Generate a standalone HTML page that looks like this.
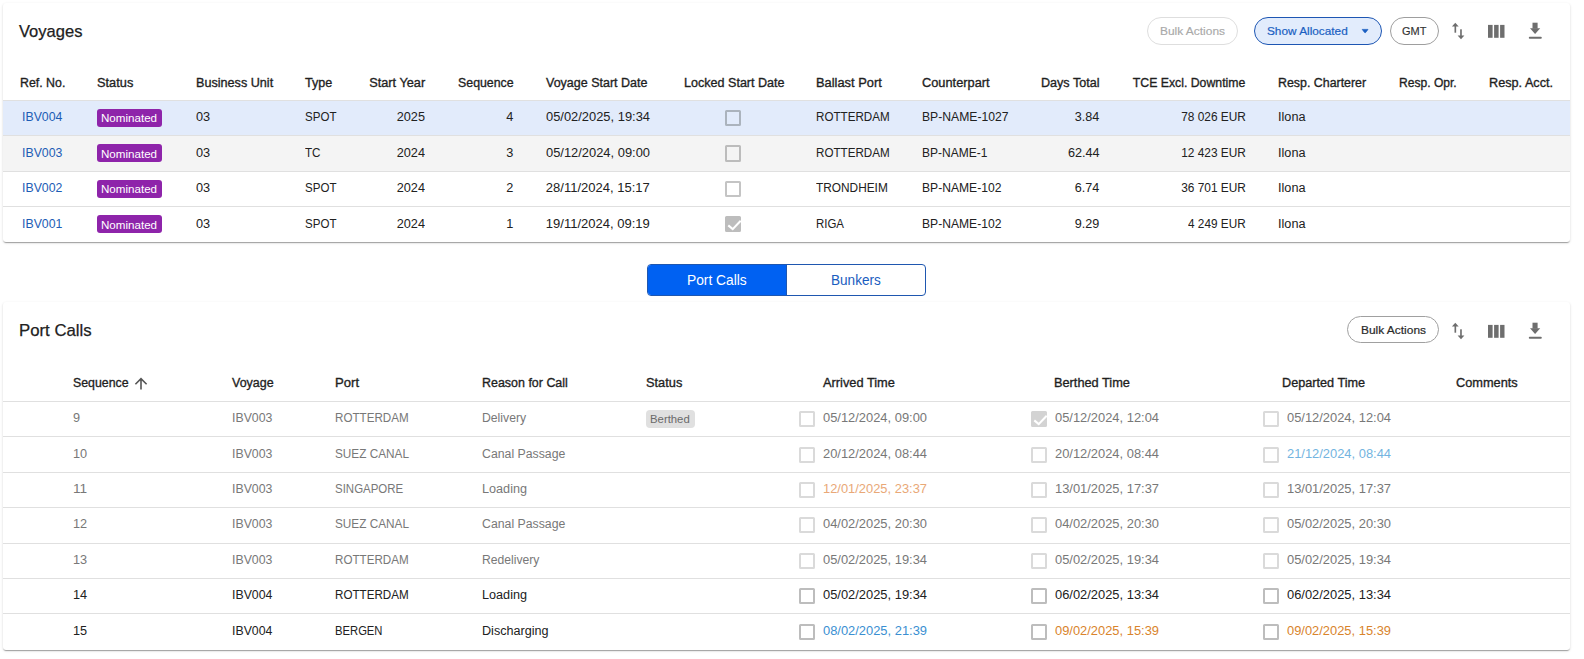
<!DOCTYPE html>
<html><head><meta charset="utf-8"><style>
html,body{margin:0;padding:0;width:1584px;height:659px;overflow:hidden;background:#fff;position:relative}
body{font-family:"Liberation Sans",sans-serif}
.card{position:absolute;background:#fff;border-radius:3px;box-shadow:0px 2px 1px -1px rgba(0,0,0,0.2),0px 1px 1px 0px rgba(0,0,0,0.14),0px 1px 3px 0px rgba(0,0,0,0.12)}
.hl{position:absolute;height:1px;background:#e0e0e0}
.btn{position:absolute;border:1px solid #bbb;border-radius:14px;box-sizing:border-box}
.badge{position:absolute;background:#8e24aa;border-radius:3px}
.cb{position:absolute;width:16.2px;height:16.2px;box-sizing:border-box;border:2px solid #bdbdbd;border-radius:1.5px}
.t{position:absolute;white-space:nowrap}
</style></head><body>
<div class="card" style="left:3px;top:3px;width:1567px;height:238.6px"></div>
<div class="btn" style="left:1147.2px;top:17.2px;width:90.5px;height:27.4px;border-color:#dedede"></div>
<div class="btn" style="left:1254px;top:17.2px;width:127.7px;height:27.4px;border-color:#1d56b3;background:#e2ecfc"></div>
<svg style="position:absolute;left:1360px;top:27px" width="10" height="8" viewBox="1360 27 10 8"><path d="M1362.2 29.4 L1368.0 29.4 L1365.6 32.5 Q1365.1 33.1 1364.6 32.5 Z" fill="#1a5fc2" stroke="#1a5fc2" stroke-width="0.7" stroke-linejoin="round"/></svg>
<div class="btn" style="left:1390px;top:17.2px;width:48.8px;height:27.4px;border-color:#9e9e9e"></div>
<svg style="position:absolute;left:1440px;top:10px" width="120" height="40" viewBox="1440 10 120 40">
<g fill="#6e6e6e">
<path d="M1451.9 26.6 L1455.3 22.8 L1458.7 26.6 Z"/><rect x="1454.5" y="25.5" width="1.65" height="7.2"/>
<path d="M1457.6 35.4 L1461.0 39.2 L1464.4 35.4 Z"/><rect x="1460.15" y="29.3" width="1.65" height="7"/>
<rect x="1488" y="24.9" width="4.6" height="12.9"/><rect x="1494.1" y="24.9" width="4.5" height="12.9"/><rect x="1500.1" y="24.9" width="4.4" height="12.9"/>
<rect x="1532.5" y="22.7" width="5.1" height="6"/><path d="M1530 28.3 L1540.2 28.3 L1535.1 34.0 Z"/><rect x="1528.8" y="36.8" width="13" height="1.9" rx="0.9"/>
</g></svg>
<div class="hl" style="left:3px;top:100px;width:1567px"></div>
<div style="position:absolute;left:3px;top:100.50px;width:1567px;height:35.40px;background:#e2ebfb"></div>
<div class="hl" style="left:3px;top:135.40px;width:1567px"></div>
<div class="badge" style="left:97px;top:108.90px;width:65px;height:18px"></div>
<div class="cb" style="left:724.90px;top:109.95px;width:16.5px;height:16.5px;border-color:#abb3bd"></div>
<div style="position:absolute;left:3px;top:135.90px;width:1567px;height:35.40px;background:#f4f4f4"></div>
<div class="hl" style="left:3px;top:170.80px;width:1567px"></div>
<div class="badge" style="left:97px;top:144.30px;width:65px;height:18px"></div>
<div class="cb" style="left:724.90px;top:145.35px;width:16.5px;height:16.5px;border-color:#bcbcbc"></div>
<div class="hl" style="left:3px;top:206.20px;width:1567px"></div>
<div class="badge" style="left:97px;top:179.70px;width:65px;height:18px"></div>
<div class="cb" style="left:724.90px;top:180.75px;width:16.5px;height:16.5px;border-color:#c4c4c4"></div>
<div class="badge" style="left:97px;top:215.10px;width:65px;height:18px"></div>
<div class="cb" style="left:725.00px;top:216.35px;width:16.1px;height:16.1px;border-color:#bdbdbd;background:#bdbdbd"><svg width="17" height="17" viewBox="0 0 17 17" style="position:absolute;left:-1px;top:-1px"><path d="M2.3 8.4 L6.7 12.1 L14.7 3.7" stroke="#fff" stroke-width="2.1" fill="none"/></svg></div>
<div style="position:absolute;left:647px;top:264px;width:276.6px;height:29.6px;border:1px solid #1f57b0;border-radius:4px;overflow:hidden;background:#fff"><div style="position:absolute;left:0;top:0;width:137.7px;height:100%;background:#0061f2;border-right:1px solid #1f57b0"></div></div>
<div class="card" style="left:3px;top:302px;width:1567px;height:347.6px"></div>
<div class="btn" style="left:1347.2px;top:316.3px;width:91.5px;height:27.2px;border-color:#a0a0a0"></div>
<svg style="position:absolute;left:1440px;top:310px" width="120" height="40" viewBox="1440 10 120 40">
<g fill="#6e6e6e">
<path d="M1451.9 26.6 L1455.3 22.8 L1458.7 26.6 Z"/><rect x="1454.5" y="25.5" width="1.65" height="7.2"/>
<path d="M1457.6 35.4 L1461.0 39.2 L1464.4 35.4 Z"/><rect x="1460.15" y="29.3" width="1.65" height="7"/>
<rect x="1488" y="24.9" width="4.6" height="12.9"/><rect x="1494.1" y="24.9" width="4.5" height="12.9"/><rect x="1500.1" y="24.9" width="4.4" height="12.9"/>
<rect x="1532.5" y="22.7" width="5.1" height="6"/><path d="M1530 28.3 L1540.2 28.3 L1535.1 34.0 Z"/><rect x="1528.8" y="36.8" width="13" height="1.9" rx="0.9"/>
</g></svg>
<svg style="position:absolute;left:130px;top:372px" width="22" height="22" viewBox="0 0 22 22"><path d="M11 7.0 L11 17.6 M5.4 12.3 L11 6.7 L16.6 12.3" stroke="#555" stroke-width="1.6" fill="none"/></svg>
<div class="hl" style="left:3px;top:401px;width:1567px"></div>
<div class="hl" style="left:3px;top:436.40px;width:1567px"></div>
<div class="badge" style="left:646.2px;top:410.20px;width:48.5px;height:17.7px;background:#e0e0e0;border-radius:4px"></div>
<div class="cb" style="left:799.20px;top:411.15px;width:16.1px;height:16.1px;border-color:#dadada"></div>
<div class="cb" style="left:1031.00px;top:411.15px;width:16.1px;height:16.1px;border-color:#d3d3d3;background:#d3d3d3"><svg width="17" height="17" viewBox="0 0 17 17" style="position:absolute;left:-1px;top:-1px"><path d="M2.3 8.4 L6.7 12.1 L14.7 3.7" stroke="#fff" stroke-width="2.1" fill="none"/></svg></div>
<div class="cb" style="left:1263.00px;top:411.15px;width:16.1px;height:16.1px;border-color:#dadada"></div>
<div class="hl" style="left:3px;top:471.80px;width:1567px"></div>
<div class="cb" style="left:799.20px;top:446.55px;width:16.1px;height:16.1px;border-color:#dadada"></div>
<div class="cb" style="left:1031.00px;top:446.55px;width:16.1px;height:16.1px;border-color:#dadada"></div>
<div class="cb" style="left:1263.00px;top:446.55px;width:16.1px;height:16.1px;border-color:#dadada"></div>
<div class="hl" style="left:3px;top:507.20px;width:1567px"></div>
<div class="cb" style="left:799.20px;top:481.95px;width:16.1px;height:16.1px;border-color:#dadada"></div>
<div class="cb" style="left:1031.00px;top:481.95px;width:16.1px;height:16.1px;border-color:#dadada"></div>
<div class="cb" style="left:1263.00px;top:481.95px;width:16.1px;height:16.1px;border-color:#dadada"></div>
<div class="hl" style="left:3px;top:542.60px;width:1567px"></div>
<div class="cb" style="left:799.20px;top:517.35px;width:16.1px;height:16.1px;border-color:#dadada"></div>
<div class="cb" style="left:1031.00px;top:517.35px;width:16.1px;height:16.1px;border-color:#dadada"></div>
<div class="cb" style="left:1263.00px;top:517.35px;width:16.1px;height:16.1px;border-color:#dadada"></div>
<div class="hl" style="left:3px;top:578.00px;width:1567px"></div>
<div class="cb" style="left:799.20px;top:552.75px;width:16.1px;height:16.1px;border-color:#dadada"></div>
<div class="cb" style="left:1031.00px;top:552.75px;width:16.1px;height:16.1px;border-color:#dadada"></div>
<div class="cb" style="left:1263.00px;top:552.75px;width:16.1px;height:16.1px;border-color:#dadada"></div>
<div class="hl" style="left:3px;top:613.40px;width:1567px"></div>
<div class="cb" style="left:799.20px;top:588.15px;width:16.1px;height:16.1px;border-color:#bdbdbd"></div>
<div class="cb" style="left:1031.00px;top:588.15px;width:16.1px;height:16.1px;border-color:#bdbdbd"></div>
<div class="cb" style="left:1263.00px;top:588.15px;width:16.1px;height:16.1px;border-color:#bdbdbd"></div>
<div class="cb" style="left:799.20px;top:623.55px;width:16.1px;height:16.1px;border-color:#bdbdbd"></div>
<div class="cb" style="left:1031.00px;top:623.55px;width:16.1px;height:16.1px;border-color:#bdbdbd"></div>
<div class="cb" style="left:1263.00px;top:623.55px;width:16.1px;height:16.1px;border-color:#bdbdbd"></div>
<div class="t" style="left:19.30px;top:23.18px;font-size:17.15px;line-height:17.15px;font-weight:400;color:#212121;transform:scaleX(0.9644);transform-origin:left;-webkit-text-stroke:0.25px #212121">Voyages</div>
<div class="t" style="left:1160.40px;top:25.06px;font-size:11.63px;line-height:11.63px;font-weight:400;color:#a9a9a9;transform:scaleX(1.0265);transform-origin:left;-webkit-text-stroke:0.15px #a9a9a9">Bulk Actions</div>
<div class="t" style="left:1267.00px;top:25.06px;font-size:11.63px;line-height:11.63px;font-weight:400;color:#1a5fc2;transform:scaleX(1.0154);transform-origin:left;-webkit-text-stroke:0.2px #1a5fc2">Show Allocated</div>
<div class="t" style="left:1402.40px;top:25.06px;font-size:11.63px;line-height:11.63px;font-weight:400;color:#333;transform:scaleX(0.9435);transform-origin:left;-webkit-text-stroke:0.15px #333">GMT</div>
<div class="t" style="left:19.70px;top:76.18px;font-size:13.02px;line-height:13.02px;font-weight:400;color:#1f1f1f;transform:scaleX(0.9493);transform-origin:left;-webkit-text-stroke:0.35px #1f1f1f">Ref. No.</div>
<div class="t" style="left:97.20px;top:76.18px;font-size:13.02px;line-height:13.02px;font-weight:400;color:#1f1f1f;transform:scaleX(0.9835);transform-origin:left;-webkit-text-stroke:0.35px #1f1f1f">Status</div>
<div class="t" style="left:195.70px;top:76.18px;font-size:13.02px;line-height:13.02px;font-weight:400;color:#1f1f1f;transform:scaleX(0.9696);transform-origin:left;-webkit-text-stroke:0.35px #1f1f1f">Business Unit</div>
<div class="t" style="left:305.00px;top:76.18px;font-size:13.02px;line-height:13.02px;font-weight:400;color:#1f1f1f;transform:scaleX(0.9640);transform-origin:left;-webkit-text-stroke:0.35px #1f1f1f">Type</div>
<div class="t" style="right:1158.70px;top:76.18px;font-size:13.02px;line-height:13.02px;font-weight:400;color:#1f1f1f;transform:scaleX(0.9792);transform-origin:right;-webkit-text-stroke:0.35px #1f1f1f">Start Year</div>
<div class="t" style="right:1070.70px;top:76.18px;font-size:13.02px;line-height:13.02px;font-weight:400;color:#1f1f1f;transform:scaleX(0.9480);transform-origin:right;-webkit-text-stroke:0.35px #1f1f1f">Sequence</div>
<div class="t" style="left:545.70px;top:76.18px;font-size:13.02px;line-height:13.02px;font-weight:400;color:#1f1f1f;transform:scaleX(0.9601);transform-origin:left;-webkit-text-stroke:0.35px #1f1f1f">Voyage Start Date</div>
<div class="t" style="left:683.60px;top:76.18px;font-size:13.02px;line-height:13.02px;font-weight:400;color:#1f1f1f;transform:scaleX(0.9654);transform-origin:left;-webkit-text-stroke:0.35px #1f1f1f">Locked Start Date</div>
<div class="t" style="left:816.20px;top:76.18px;font-size:13.02px;line-height:13.02px;font-weight:400;color:#1f1f1f;transform:scaleX(0.9887);transform-origin:left;-webkit-text-stroke:0.35px #1f1f1f">Ballast Port</div>
<div class="t" style="left:922.20px;top:76.18px;font-size:13.02px;line-height:13.02px;font-weight:400;color:#1f1f1f;transform:scaleX(0.9834);transform-origin:left;-webkit-text-stroke:0.35px #1f1f1f">Counterpart</div>
<div class="t" style="right:484.30px;top:76.18px;font-size:13.02px;line-height:13.02px;font-weight:400;color:#1f1f1f;transform:scaleX(0.9677);transform-origin:right;-webkit-text-stroke:0.35px #1f1f1f">Days Total</div>
<div class="t" style="right:338.50px;top:76.18px;font-size:13.02px;line-height:13.02px;font-weight:400;color:#1f1f1f;transform:scaleX(0.9432);transform-origin:right;-webkit-text-stroke:0.35px #1f1f1f">TCE Excl. Downtime</div>
<div class="t" style="left:1278.00px;top:76.18px;font-size:13.02px;line-height:13.02px;font-weight:400;color:#1f1f1f;transform:scaleX(0.9516);transform-origin:left;-webkit-text-stroke:0.35px #1f1f1f">Resp. Charterer</div>
<div class="t" style="left:1399.00px;top:76.18px;font-size:13.02px;line-height:13.02px;font-weight:400;color:#1f1f1f;transform:scaleX(0.9274);transform-origin:left;-webkit-text-stroke:0.35px #1f1f1f">Resp. Opr.</div>
<div class="t" style="left:1489.00px;top:76.18px;font-size:13.02px;line-height:13.02px;font-weight:400;color:#1f1f1f;transform:scaleX(0.9732);transform-origin:left;-webkit-text-stroke:0.35px #1f1f1f">Resp. Acct.</div>
<div class="t" style="left:22.20px;top:109.78px;font-size:13.02px;line-height:13.02px;font-weight:400;color:#1d5db5;transform:scaleX(0.9458);transform-origin:left">IBV004</div>
<div class="t" style="left:100.90px;top:111.93px;font-size:11.78px;line-height:11.78px;font-weight:400;color:#fff;transform:scaleX(0.9852);transform-origin:left">Nominated</div>
<div class="t" style="left:195.70px;top:109.78px;font-size:13.02px;line-height:13.02px;font-weight:400;color:#212121;transform:scaleX(0.9773);transform-origin:left">03</div>
<div class="t" style="left:305.00px;top:109.78px;font-size:13.02px;line-height:13.02px;font-weight:400;color:#212121;transform:scaleX(0.8871);transform-origin:left">SPOT</div>
<div class="t" style="right:1158.70px;top:109.78px;font-size:13.02px;line-height:13.02px;font-weight:400;color:#212121;transform:scaleX(0.9773);transform-origin:right">2025</div>
<div class="t" style="right:1070.70px;top:109.78px;font-size:13.02px;line-height:13.02px;font-weight:400;color:#212121;transform:scaleX(0.9763);transform-origin:right">4</div>
<div class="t" style="left:545.80px;top:109.78px;font-size:13.02px;line-height:13.02px;font-weight:400;color:#212121;transform:scaleX(0.9908);transform-origin:left">05/02/2025, 19:34</div>
<div class="t" style="left:816.20px;top:109.78px;font-size:13.02px;line-height:13.02px;font-weight:400;color:#212121;transform:scaleX(0.8935);transform-origin:left">ROTTERDAM</div>
<div class="t" style="left:922.20px;top:109.78px;font-size:13.02px;line-height:13.02px;font-weight:400;color:#212121;transform:scaleX(0.9345);transform-origin:left">BP-NAME-1027</div>
<div class="t" style="right:484.30px;top:109.78px;font-size:13.02px;line-height:13.02px;font-weight:400;color:#212121;transform:scaleX(0.9692);transform-origin:right">3.84</div>
<div class="t" style="right:338.50px;top:109.78px;font-size:13.02px;line-height:13.02px;font-weight:400;color:#212121;transform:scaleX(0.9130);transform-origin:right">78 026 EUR</div>
<div class="t" style="left:1278.00px;top:109.78px;font-size:13.02px;line-height:13.02px;font-weight:400;color:#212121;transform:scaleX(0.9734);transform-origin:left">Ilona</div>
<div class="t" style="left:22.20px;top:145.78px;font-size:13.02px;line-height:13.02px;font-weight:400;color:#1d5db5;transform:scaleX(0.9458);transform-origin:left">IBV003</div>
<div class="t" style="left:100.90px;top:147.93px;font-size:11.78px;line-height:11.78px;font-weight:400;color:#fff;transform:scaleX(0.9852);transform-origin:left">Nominated</div>
<div class="t" style="left:195.70px;top:145.78px;font-size:13.02px;line-height:13.02px;font-weight:400;color:#212121;transform:scaleX(0.9773);transform-origin:left">03</div>
<div class="t" style="left:305.00px;top:145.78px;font-size:13.02px;line-height:13.02px;font-weight:400;color:#212121;transform:scaleX(0.8956);transform-origin:left">TC</div>
<div class="t" style="right:1158.70px;top:145.78px;font-size:13.02px;line-height:13.02px;font-weight:400;color:#212121;transform:scaleX(0.9773);transform-origin:right">2024</div>
<div class="t" style="right:1070.70px;top:145.78px;font-size:13.02px;line-height:13.02px;font-weight:400;color:#212121;transform:scaleX(0.9763);transform-origin:right">3</div>
<div class="t" style="left:545.80px;top:145.78px;font-size:13.02px;line-height:13.02px;font-weight:400;color:#212121;transform:scaleX(0.9908);transform-origin:left">05/12/2024, 09:00</div>
<div class="t" style="left:816.20px;top:145.78px;font-size:13.02px;line-height:13.02px;font-weight:400;color:#212121;transform:scaleX(0.8935);transform-origin:left">ROTTERDAM</div>
<div class="t" style="left:922.20px;top:145.78px;font-size:13.02px;line-height:13.02px;font-weight:400;color:#212121;transform:scaleX(0.9213);transform-origin:left">BP-NAME-1</div>
<div class="t" style="right:484.30px;top:145.78px;font-size:13.02px;line-height:13.02px;font-weight:400;color:#212121;transform:scaleX(0.9712);transform-origin:right">62.44</div>
<div class="t" style="right:338.50px;top:145.78px;font-size:13.02px;line-height:13.02px;font-weight:400;color:#212121;transform:scaleX(0.9130);transform-origin:right">12 423 EUR</div>
<div class="t" style="left:1278.00px;top:145.78px;font-size:13.02px;line-height:13.02px;font-weight:400;color:#212121;transform:scaleX(0.9734);transform-origin:left">Ilona</div>
<div class="t" style="left:22.20px;top:181.18px;font-size:13.02px;line-height:13.02px;font-weight:400;color:#1d5db5;transform:scaleX(0.9458);transform-origin:left">IBV002</div>
<div class="t" style="left:100.90px;top:183.33px;font-size:11.78px;line-height:11.78px;font-weight:400;color:#fff;transform:scaleX(0.9852);transform-origin:left">Nominated</div>
<div class="t" style="left:195.70px;top:181.18px;font-size:13.02px;line-height:13.02px;font-weight:400;color:#212121;transform:scaleX(0.9773);transform-origin:left">03</div>
<div class="t" style="left:305.00px;top:181.18px;font-size:13.02px;line-height:13.02px;font-weight:400;color:#212121;transform:scaleX(0.8871);transform-origin:left">SPOT</div>
<div class="t" style="right:1158.70px;top:181.18px;font-size:13.02px;line-height:13.02px;font-weight:400;color:#212121;transform:scaleX(0.9773);transform-origin:right">2024</div>
<div class="t" style="right:1070.70px;top:181.18px;font-size:13.02px;line-height:13.02px;font-weight:400;color:#212121;transform:scaleX(0.9763);transform-origin:right">2</div>
<div class="t" style="left:545.80px;top:181.18px;font-size:13.02px;line-height:13.02px;font-weight:400;color:#212121;transform:scaleX(1.0000);transform-origin:left">28/11/2024, 15:17</div>
<div class="t" style="left:816.20px;top:181.18px;font-size:13.02px;line-height:13.02px;font-weight:400;color:#212121;transform:scaleX(0.9104);transform-origin:left">TRONDHEIM</div>
<div class="t" style="left:922.20px;top:181.18px;font-size:13.02px;line-height:13.02px;font-weight:400;color:#212121;transform:scaleX(0.9308);transform-origin:left">BP-NAME-102</div>
<div class="t" style="right:484.30px;top:181.18px;font-size:13.02px;line-height:13.02px;font-weight:400;color:#212121;transform:scaleX(0.9692);transform-origin:right">6.74</div>
<div class="t" style="right:338.50px;top:181.18px;font-size:13.02px;line-height:13.02px;font-weight:400;color:#212121;transform:scaleX(0.9130);transform-origin:right">36 701 EUR</div>
<div class="t" style="left:1278.00px;top:181.18px;font-size:13.02px;line-height:13.02px;font-weight:400;color:#212121;transform:scaleX(0.9734);transform-origin:left">Ilona</div>
<div class="t" style="left:22.20px;top:216.98px;font-size:13.02px;line-height:13.02px;font-weight:400;color:#1d5db5;transform:scaleX(0.9458);transform-origin:left">IBV001</div>
<div class="t" style="left:100.90px;top:219.13px;font-size:11.78px;line-height:11.78px;font-weight:400;color:#fff;transform:scaleX(0.9852);transform-origin:left">Nominated</div>
<div class="t" style="left:195.70px;top:216.98px;font-size:13.02px;line-height:13.02px;font-weight:400;color:#212121;transform:scaleX(0.9773);transform-origin:left">03</div>
<div class="t" style="left:305.00px;top:216.98px;font-size:13.02px;line-height:13.02px;font-weight:400;color:#212121;transform:scaleX(0.8871);transform-origin:left">SPOT</div>
<div class="t" style="right:1158.70px;top:216.98px;font-size:13.02px;line-height:13.02px;font-weight:400;color:#212121;transform:scaleX(0.9773);transform-origin:right">2024</div>
<div class="t" style="right:1070.70px;top:216.98px;font-size:13.02px;line-height:13.02px;font-weight:400;color:#212121;transform:scaleX(0.9763);transform-origin:right">1</div>
<div class="t" style="left:545.80px;top:216.98px;font-size:13.02px;line-height:13.02px;font-weight:400;color:#212121;transform:scaleX(1.0000);transform-origin:left">19/11/2024, 09:19</div>
<div class="t" style="left:816.20px;top:216.98px;font-size:13.02px;line-height:13.02px;font-weight:400;color:#212121;transform:scaleX(0.8792);transform-origin:left">RIGA</div>
<div class="t" style="left:922.20px;top:216.98px;font-size:13.02px;line-height:13.02px;font-weight:400;color:#212121;transform:scaleX(0.9308);transform-origin:left">BP-NAME-102</div>
<div class="t" style="right:484.30px;top:216.98px;font-size:13.02px;line-height:13.02px;font-weight:400;color:#212121;transform:scaleX(0.9692);transform-origin:right">9.29</div>
<div class="t" style="right:338.50px;top:216.98px;font-size:13.02px;line-height:13.02px;font-weight:400;color:#212121;transform:scaleX(0.9055);transform-origin:right">4 249 EUR</div>
<div class="t" style="left:1278.00px;top:216.98px;font-size:13.02px;line-height:13.02px;font-weight:400;color:#212121;transform:scaleX(0.9734);transform-origin:left">Ilona</div>
<div class="t" style="left:687.00px;top:273.43px;font-size:14.26px;line-height:14.26px;font-weight:400;color:#fff;transform:scaleX(0.9671);transform-origin:left">Port Calls</div>
<div class="t" style="left:831.00px;top:273.43px;font-size:14.26px;line-height:14.26px;font-weight:400;color:#1a5dc0;transform:scaleX(0.9525);transform-origin:left">Bunkers</div>
<div class="t" style="left:19.20px;top:321.78px;font-size:17.15px;line-height:17.15px;font-weight:400;color:#212121;transform:scaleX(0.9773);transform-origin:left;-webkit-text-stroke:0.25px #212121">Port Calls</div>
<div class="t" style="left:1361.20px;top:324.06px;font-size:11.63px;line-height:11.63px;font-weight:400;color:#2a2a2a;transform:scaleX(1.0265);transform-origin:left;-webkit-text-stroke:0.2px #2a2a2a">Bulk Actions</div>
<div class="t" style="left:73.00px;top:376.28px;font-size:13.02px;line-height:13.02px;font-weight:400;color:#1f1f1f;transform:scaleX(0.9480);transform-origin:left;-webkit-text-stroke:0.35px #1f1f1f">Sequence</div>
<div class="t" style="left:231.70px;top:376.28px;font-size:13.02px;line-height:13.02px;font-weight:400;color:#1f1f1f;transform:scaleX(0.9590);transform-origin:left;-webkit-text-stroke:0.35px #1f1f1f">Voyage</div>
<div class="t" style="left:334.70px;top:376.28px;font-size:13.02px;line-height:13.02px;font-weight:400;color:#1f1f1f;transform:scaleX(1.0079);transform-origin:left;-webkit-text-stroke:0.35px #1f1f1f">Port</div>
<div class="t" style="left:481.60px;top:376.28px;font-size:13.02px;line-height:13.02px;font-weight:400;color:#1f1f1f;transform:scaleX(0.9568);transform-origin:left;-webkit-text-stroke:0.35px #1f1f1f">Reason for Call</div>
<div class="t" style="left:646.20px;top:376.28px;font-size:13.02px;line-height:13.02px;font-weight:400;color:#1f1f1f;transform:scaleX(0.9835);transform-origin:left;-webkit-text-stroke:0.35px #1f1f1f">Status</div>
<div class="t" style="left:823.40px;top:376.28px;font-size:13.02px;line-height:13.02px;font-weight:400;color:#1f1f1f;transform:scaleX(0.9844);transform-origin:left;-webkit-text-stroke:0.35px #1f1f1f">Arrived Time</div>
<div class="t" style="left:1054.00px;top:376.28px;font-size:13.02px;line-height:13.02px;font-weight:400;color:#1f1f1f;transform:scaleX(0.9808);transform-origin:left;-webkit-text-stroke:0.35px #1f1f1f">Berthed Time</div>
<div class="t" style="left:1282.00px;top:376.28px;font-size:13.02px;line-height:13.02px;font-weight:400;color:#1f1f1f;transform:scaleX(0.9731);transform-origin:left;-webkit-text-stroke:0.35px #1f1f1f">Departed Time</div>
<div class="t" style="left:1456.00px;top:376.28px;font-size:13.02px;line-height:13.02px;font-weight:400;color:#1f1f1f;transform:scaleX(0.9811);transform-origin:left;-webkit-text-stroke:0.35px #1f1f1f">Comments</div>
<div class="t" style="left:73.00px;top:410.98px;font-size:13.02px;line-height:13.02px;font-weight:400;color:#787878;transform:scaleX(0.9763);transform-origin:left">9</div>
<div class="t" style="left:231.70px;top:410.98px;font-size:13.02px;line-height:13.02px;font-weight:400;color:#787878;transform:scaleX(0.9458);transform-origin:left">IBV003</div>
<div class="t" style="left:334.70px;top:410.98px;font-size:13.02px;line-height:13.02px;font-weight:400;color:#787878;transform:scaleX(0.8935);transform-origin:left">ROTTERDAM</div>
<div class="t" style="left:481.60px;top:410.98px;font-size:13.02px;line-height:13.02px;font-weight:400;color:#787878;transform:scaleX(0.9382);transform-origin:left">Delivery</div>
<div class="t" style="left:649.80px;top:413.43px;font-size:11.78px;line-height:11.78px;font-weight:400;color:#6a6a6a;transform:scaleX(0.9644);transform-origin:left">Berthed</div>
<div class="t" style="left:822.60px;top:410.98px;font-size:13.02px;line-height:13.02px;font-weight:400;color:#787878;transform:scaleX(0.9908);transform-origin:left">05/12/2024, 09:00</div>
<div class="t" style="left:1054.70px;top:410.98px;font-size:13.02px;line-height:13.02px;font-weight:400;color:#787878;transform:scaleX(0.9908);transform-origin:left">05/12/2024, 12:04</div>
<div class="t" style="left:1286.60px;top:410.98px;font-size:13.02px;line-height:13.02px;font-weight:400;color:#787878;transform:scaleX(0.9908);transform-origin:left">05/12/2024, 12:04</div>
<div class="t" style="left:73.00px;top:446.88px;font-size:13.02px;line-height:13.02px;font-weight:400;color:#787878;transform:scaleX(0.9773);transform-origin:left">10</div>
<div class="t" style="left:231.70px;top:446.88px;font-size:13.02px;line-height:13.02px;font-weight:400;color:#787878;transform:scaleX(0.9458);transform-origin:left">IBV003</div>
<div class="t" style="left:334.70px;top:446.88px;font-size:13.02px;line-height:13.02px;font-weight:400;color:#787878;transform:scaleX(0.9052);transform-origin:left">SUEZ CANAL</div>
<div class="t" style="left:481.60px;top:446.88px;font-size:13.02px;line-height:13.02px;font-weight:400;color:#787878;transform:scaleX(0.9444);transform-origin:left">Canal Passage</div>
<div class="t" style="left:822.60px;top:446.88px;font-size:13.02px;line-height:13.02px;font-weight:400;color:#787878;transform:scaleX(0.9908);transform-origin:left">20/12/2024, 08:44</div>
<div class="t" style="left:1054.70px;top:446.88px;font-size:13.02px;line-height:13.02px;font-weight:400;color:#787878;transform:scaleX(0.9908);transform-origin:left">20/12/2024, 08:44</div>
<div class="t" style="left:1286.60px;top:446.88px;font-size:13.02px;line-height:13.02px;font-weight:400;color:#73b4e0;transform:scaleX(0.9908);transform-origin:left">21/12/2024, 08:44</div>
<div class="t" style="left:73.00px;top:481.68px;font-size:13.02px;line-height:13.02px;font-weight:400;color:#787878;transform:scaleX(1.0474);transform-origin:left">11</div>
<div class="t" style="left:231.70px;top:481.68px;font-size:13.02px;line-height:13.02px;font-weight:400;color:#787878;transform:scaleX(0.9458);transform-origin:left">IBV003</div>
<div class="t" style="left:334.70px;top:481.68px;font-size:13.02px;line-height:13.02px;font-weight:400;color:#787878;transform:scaleX(0.8815);transform-origin:left">SINGAPORE</div>
<div class="t" style="left:481.60px;top:481.68px;font-size:13.02px;line-height:13.02px;font-weight:400;color:#787878;transform:scaleX(0.9717);transform-origin:left">Loading</div>
<div class="t" style="left:822.60px;top:481.68px;font-size:13.02px;line-height:13.02px;font-weight:400;color:#e9a877;transform:scaleX(0.9908);transform-origin:left">12/01/2025, 23:37</div>
<div class="t" style="left:1054.70px;top:481.68px;font-size:13.02px;line-height:13.02px;font-weight:400;color:#787878;transform:scaleX(0.9908);transform-origin:left">13/01/2025, 17:37</div>
<div class="t" style="left:1286.60px;top:481.68px;font-size:13.02px;line-height:13.02px;font-weight:400;color:#787878;transform:scaleX(0.9908);transform-origin:left">13/01/2025, 17:37</div>
<div class="t" style="left:73.00px;top:516.88px;font-size:13.02px;line-height:13.02px;font-weight:400;color:#787878;transform:scaleX(0.9773);transform-origin:left">12</div>
<div class="t" style="left:231.70px;top:516.88px;font-size:13.02px;line-height:13.02px;font-weight:400;color:#787878;transform:scaleX(0.9458);transform-origin:left">IBV003</div>
<div class="t" style="left:334.70px;top:516.88px;font-size:13.02px;line-height:13.02px;font-weight:400;color:#787878;transform:scaleX(0.9052);transform-origin:left">SUEZ CANAL</div>
<div class="t" style="left:481.60px;top:516.88px;font-size:13.02px;line-height:13.02px;font-weight:400;color:#787878;transform:scaleX(0.9444);transform-origin:left">Canal Passage</div>
<div class="t" style="left:822.60px;top:516.88px;font-size:13.02px;line-height:13.02px;font-weight:400;color:#787878;transform:scaleX(0.9908);transform-origin:left">04/02/2025, 20:30</div>
<div class="t" style="left:1054.70px;top:516.88px;font-size:13.02px;line-height:13.02px;font-weight:400;color:#787878;transform:scaleX(0.9908);transform-origin:left">04/02/2025, 20:30</div>
<div class="t" style="left:1286.60px;top:516.88px;font-size:13.02px;line-height:13.02px;font-weight:400;color:#787878;transform:scaleX(0.9908);transform-origin:left">05/02/2025, 20:30</div>
<div class="t" style="left:73.00px;top:552.58px;font-size:13.02px;line-height:13.02px;font-weight:400;color:#787878;transform:scaleX(0.9773);transform-origin:left">13</div>
<div class="t" style="left:231.70px;top:552.58px;font-size:13.02px;line-height:13.02px;font-weight:400;color:#787878;transform:scaleX(0.9458);transform-origin:left">IBV003</div>
<div class="t" style="left:334.70px;top:552.58px;font-size:13.02px;line-height:13.02px;font-weight:400;color:#787878;transform:scaleX(0.8935);transform-origin:left">ROTTERDAM</div>
<div class="t" style="left:481.60px;top:552.58px;font-size:13.02px;line-height:13.02px;font-weight:400;color:#787878;transform:scaleX(0.9332);transform-origin:left">Redelivery</div>
<div class="t" style="left:822.60px;top:552.58px;font-size:13.02px;line-height:13.02px;font-weight:400;color:#787878;transform:scaleX(0.9908);transform-origin:left">05/02/2025, 19:34</div>
<div class="t" style="left:1054.70px;top:552.58px;font-size:13.02px;line-height:13.02px;font-weight:400;color:#787878;transform:scaleX(0.9908);transform-origin:left">05/02/2025, 19:34</div>
<div class="t" style="left:1286.60px;top:552.58px;font-size:13.02px;line-height:13.02px;font-weight:400;color:#787878;transform:scaleX(0.9908);transform-origin:left">05/02/2025, 19:34</div>
<div class="t" style="left:73.00px;top:587.78px;font-size:13.02px;line-height:13.02px;font-weight:400;color:#212121;transform:scaleX(0.9773);transform-origin:left">14</div>
<div class="t" style="left:231.70px;top:587.78px;font-size:13.02px;line-height:13.02px;font-weight:400;color:#212121;transform:scaleX(0.9458);transform-origin:left">IBV004</div>
<div class="t" style="left:334.70px;top:587.78px;font-size:13.02px;line-height:13.02px;font-weight:400;color:#212121;transform:scaleX(0.8935);transform-origin:left">ROTTERDAM</div>
<div class="t" style="left:481.60px;top:587.78px;font-size:13.02px;line-height:13.02px;font-weight:400;color:#212121;transform:scaleX(0.9717);transform-origin:left">Loading</div>
<div class="t" style="left:822.60px;top:587.78px;font-size:13.02px;line-height:13.02px;font-weight:400;color:#212121;transform:scaleX(0.9908);transform-origin:left">05/02/2025, 19:34</div>
<div class="t" style="left:1054.70px;top:587.78px;font-size:13.02px;line-height:13.02px;font-weight:400;color:#212121;transform:scaleX(0.9908);transform-origin:left">06/02/2025, 13:34</div>
<div class="t" style="left:1286.60px;top:587.78px;font-size:13.02px;line-height:13.02px;font-weight:400;color:#212121;transform:scaleX(0.9908);transform-origin:left">06/02/2025, 13:34</div>
<div class="t" style="left:73.00px;top:623.68px;font-size:13.02px;line-height:13.02px;font-weight:400;color:#212121;transform:scaleX(0.9773);transform-origin:left">15</div>
<div class="t" style="left:231.70px;top:623.68px;font-size:13.02px;line-height:13.02px;font-weight:400;color:#212121;transform:scaleX(0.9458);transform-origin:left">IBV004</div>
<div class="t" style="left:334.70px;top:623.68px;font-size:13.02px;line-height:13.02px;font-weight:400;color:#212121;transform:scaleX(0.8641);transform-origin:left">BERGEN</div>
<div class="t" style="left:481.60px;top:623.68px;font-size:13.02px;line-height:13.02px;font-weight:400;color:#212121;transform:scaleX(0.9679);transform-origin:left">Discharging</div>
<div class="t" style="left:822.60px;top:623.68px;font-size:13.02px;line-height:13.02px;font-weight:400;color:#3a8fd2;transform:scaleX(0.9908);transform-origin:left">08/02/2025, 21:39</div>
<div class="t" style="left:1054.70px;top:623.68px;font-size:13.02px;line-height:13.02px;font-weight:400;color:#d9842c;transform:scaleX(0.9908);transform-origin:left">09/02/2025, 15:39</div>
<div class="t" style="left:1286.60px;top:623.68px;font-size:13.02px;line-height:13.02px;font-weight:400;color:#d9842c;transform:scaleX(0.9908);transform-origin:left">09/02/2025, 15:39</div>
</body></html>
